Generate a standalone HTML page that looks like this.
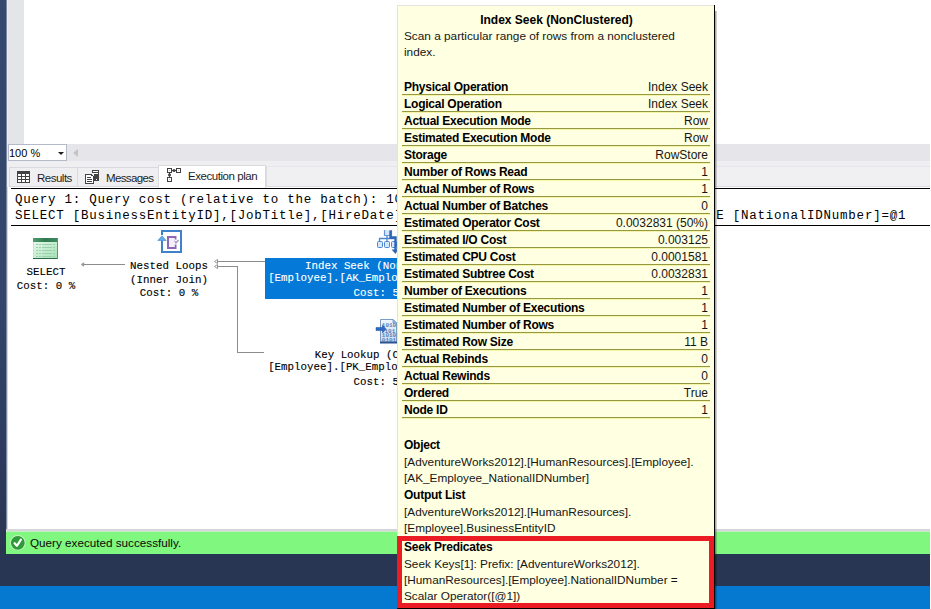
<!DOCTYPE html>
<html><head><meta charset="utf-8">
<style>
html,body{margin:0;padding:0;width:931px;height:609px;overflow:hidden;background:#fff;}
body{position:relative;font-family:"Liberation Sans",sans-serif;}
.a{position:absolute;}
.mono{font-family:"Liberation Mono",monospace;}
.tt{position:absolute;left:397px;top:5px;width:317px;height:604px;background:#ffffe1;border-left:1px solid #e4e4dc;border-top:1px solid #e4e4dc;box-sizing:border-box;}
.row{position:absolute;left:4px;width:308px;height:17px;border-bottom:1px solid #949743;box-sizing:border-box;font-size:12px;line-height:16px;}
.row::after{content:"";position:absolute;left:0;right:0;bottom:-2px;height:1px;background:#f6f5a6;}
.row b{position:absolute;left:2px;top:1px;color:#000;letter-spacing:-0.25px;}
.row span{position:absolute;right:2px;top:1px;color:#161616;}
.sh{position:absolute;left:6px;font-size:12px;line-height:17px;font-weight:bold;color:#000;letter-spacing:-0.25px;white-space:nowrap;}
.sl{position:absolute;left:6px;font-size:11.8px;line-height:16px;color:#161616;white-space:nowrap;}
.pl{position:absolute;font-family:"Liberation Mono",monospace;font-size:10.8px;line-height:13px;white-space:pre;color:#000;-webkit-text-stroke:0.12px currentColor;text-align:center;width:400px;}
</style></head><body>
<!-- left dark strip -->
<div class="a" style="left:0;top:0;width:6px;height:554px;background:linear-gradient(to bottom,#35486e 0px,#33456a 300px,#2e3d62 430px,#29344f 554px);"></div>
<div class="a" style="left:6px;top:0;width:1px;height:531px;background:#7c87a3;"></div>
<!-- editor margin -->
<div class="a" style="left:7px;top:0;width:17px;height:144px;background:#e4e5e8;"></div>
<div class="a" style="left:7px;top:0;width:1px;height:144px;background:#e8ecf8;"></div>
<!-- zoom/scroll row -->
<div class="a" style="left:7px;top:144px;width:923px;height:17px;background:#e6e6ea;"></div>
<div class="a" style="left:8px;top:144px;width:57px;height:15px;background:#fff;border:1px solid #b4bac8;"></div>
<div class="a" style="left:9px;top:147px;font-size:11px;line-height:13px;color:#000;">100 %</div>
<div class="a" style="left:58px;top:152px;width:0;height:0;border-left:3px solid transparent;border-right:3px solid transparent;border-top:3px solid #1e1e1e;"></div>
<div class="a" style="left:73px;top:149px;width:0;height:0;border-top:4px solid transparent;border-bottom:4px solid transparent;border-right:5px solid #c2c3c9;"></div>
<!-- tab strip -->
<div class="a" style="left:7px;top:161px;width:923px;height:26px;background:#efeff2;"></div>
<div class="a" style="left:7px;top:187px;width:923px;height:366px;background:#fff;"></div>
<div class="a" style="left:7px;top:187px;width:1px;height:342px;background:#d2d6e6;"></div>
<div class="a" style="left:11px;top:188px;width:919px;height:1px;background:#000;"></div>
<div class="a" style="left:11px;top:225px;width:919px;height:1px;background:#000;"></div>

<!-- tabs -->
<div class="a" style="left:266px;top:166px;width:664px;height:21px;box-sizing:border-box;border:1px solid #dcdce0;border-top-color:#e6e6ea;border-right:none;background:#f0f0f2;"></div>
<div class="a" style="left:9px;top:167px;width:68px;height:20px;box-sizing:border-box;border:1px solid #dadade;border-right:none;background:#efeff2;"></div>
<div class="a" style="left:77px;top:167px;width:81px;height:20px;box-sizing:border-box;border:1px solid #dadade;border-right:none;background:#efeff2;"></div>
<div class="a" style="left:158px;top:165px;width:108px;height:23px;box-sizing:border-box;border:1px solid #dadade;border-bottom:none;background:#fff;"></div>
<div class="a" style="left:11px;top:187px;width:147px;height:1px;background:#fff;"></div>
<svg class="a" style="left:17px;top:171px" width="13" height="12" viewBox="0 0 13 12">
<rect x="0" y="0" width="13" height="12" fill="#424242"/>
<rect x="1" y="3" width="3" height="2" fill="#fff"/><rect x="5" y="3" width="3" height="2" fill="#fff"/><rect x="9" y="3" width="3" height="2" fill="#fff"/>
<rect x="1" y="6" width="3" height="2" fill="#fff"/><rect x="5" y="6" width="3" height="2" fill="#fff"/><rect x="9" y="6" width="3" height="2" fill="#fff"/>
<rect x="1" y="9" width="3" height="2" fill="#fff"/><rect x="5" y="9" width="3" height="2" fill="#fff"/><rect x="9" y="9" width="3" height="2" fill="#fff"/>
</svg>
<div class="a" style="left:37px;top:171px;font-size:11.5px;line-height:14px;letter-spacing:-0.5px;color:#1e1e1e;">Results</div>
<svg class="a" style="left:84px;top:169px" width="16" height="16" viewBox="0 0 16 16" shape-rendering="crispEdges">
<rect x="8" y="1" width="7" height="11" fill="#424242"/>
<rect x="9" y="2" width="5" height="1" fill="#fff"/><rect x="9" y="4" width="5" height="1" fill="#fff"/><rect x="12" y="10" width="1" height="1" fill="#fff"/>
<rect x="0" y="4" width="10" height="12" fill="#efeff2"/>
<path d="M1 5 H7 L9 7 V15 H1 Z" fill="#fff"/>
<rect x="1" y="5" width="6" height="1" fill="#424242"/><rect x="1" y="5" width="1" height="10" fill="#424242"/><rect x="1" y="14" width="9" height="1" fill="#424242"/><rect x="9" y="7" width="1" height="8" fill="#424242"/>
<rect x="7" y="5" width="1" height="1" fill="#424242"/><rect x="8" y="6" width="1" height="1" fill="#424242"/><rect x="7" y="6" width="1" height="1" fill="#424242"/>
<rect x="3" y="8" width="4" height="1" fill="#424242"/><rect x="3" y="10" width="5" height="1" fill="#424242"/><rect x="3" y="12" width="5" height="1" fill="#424242"/>
</svg>
<div class="a" style="left:106px;top:171px;font-size:11.5px;line-height:14px;letter-spacing:-0.62px;color:#1e1e1e;">Messages</div>
<svg class="a" style="left:166px;top:167px" width="16" height="16" viewBox="0 0 16 16">
<rect x="1.5" y="1.5" width="4" height="4" fill="#fff" stroke="#424242"/>
<rect x="10.5" y="1.5" width="4" height="4" fill="#fff" stroke="#424242"/>
<rect x="1.5" y="10.5" width="4" height="4" fill="#fff" stroke="#424242"/>
<rect x="3" y="3" width="1" height="1" fill="#c8c8c8"/><rect x="12" y="3" width="1" height="1" fill="#c8c8c8"/><rect x="3" y="12" width="1" height="1" fill="#c8c8c8"/>
<path d="M6 3.5 H10" stroke="#424242"/><ellipse cx="8" cy="3.5" rx="1.6" ry="1.5" fill="#424242"/>
<path d="M3.5 6 V10" stroke="#424242"/><ellipse cx="3.5" cy="8" rx="1.5" ry="1.4" fill="#424242"/>
</svg>
<div class="a" style="left:188px;top:169px;font-size:11.5px;line-height:14px;letter-spacing:-0.45px;color:#1e1e1e;">Execution plan</div>
<!-- query text -->
<div class="a mono" style="left:15px;top:192px;font-size:12.5px;letter-spacing:0.75px;line-height:16px;white-space:pre;color:#000;">Query 1: Query cost (relative to the batch): 100%
SELECT [BusinessEntityID],[JobTitle],[HireDate] FROM [HumanResources].[Employee] WHERE [NationalIDNumber]=@1</div>
<!-- plan -->
<svg class="a" style="left:33px;top:238px" width="25" height="21" viewBox="0 0 25 21" shape-rendering="crispEdges">
<defs><linearGradient id="gs" x1="0" y1="0" x2="1" y2="1"><stop offset="0" stop-color="#eefaf0"/><stop offset="1" stop-color="#9fe2b2"/></linearGradient>
<linearGradient id="gh" x1="0" y1="0" x2="1" y2="0"><stop offset="0" stop-color="#4f9c6c"/><stop offset="0.5" stop-color="#2f7a52"/><stop offset="1" stop-color="#3f8a5e"/></linearGradient></defs>
<rect x="0" y="0" width="25" height="21" fill="url(#gs)"/>
<rect x="0" y="0" width="25" height="4" fill="url(#gh)"/>
<rect x="0" y="20" width="25" height="1" fill="#2c6a48"/>
<rect x="24" y="0" width="1" height="21" fill="#5a9a72"/>
<rect x="0" y="4" width="1" height="16" fill="#bfe6ca"/>
<g fill="#9ccfb0"><rect x="3" y="6" width="2" height="1"/><rect x="6" y="6" width="2" height="1"/><rect x="9" y="6" width="10" height="1"/><rect x="20" y="6" width="2" height="1"/><rect x="3" y="9" width="2" height="1"/><rect x="6" y="9" width="2" height="1"/><rect x="9" y="9" width="10" height="1"/><rect x="20" y="9" width="2" height="1"/><rect x="3" y="12" width="2" height="1"/><rect x="6" y="12" width="2" height="1"/><rect x="9" y="12" width="10" height="1"/><rect x="20" y="12" width="2" height="1"/><rect x="3" y="15" width="2" height="1"/><rect x="6" y="15" width="2" height="1"/><rect x="9" y="15" width="10" height="1"/><rect x="20" y="15" width="2" height="1"/><rect x="3" y="18" width="2" height="1"/><rect x="6" y="18" width="2" height="1"/><rect x="9" y="18" width="10" height="1"/><rect x="20" y="18" width="2" height="1"/></g>
</svg>
<div class="a" style="left:82px;top:264px;width:43px;height:1px;background:#8c8c8c;"></div>
<svg class="a" style="left:80px;top:260px" width="8" height="9"><path d="M1.2 4.5 L3.8 2.8 L3.8 6.2 Z" fill="#a0a0a0" stroke="#8c8c8c" stroke-width="0.7"/></svg>
<svg class="a" style="left:157px;top:229px" width="26" height="25" viewBox="0 0 26 25">
<path d="M5 6 V2 H24 V23 H5 V11.5" fill="none" stroke="#3f82c9" stroke-width="2"/>
<path d="M0.8 11.5 L5 6.8 L9.2 11.5 Z" fill="#62aee8" stroke="#3f82c9" stroke-width="0.6"/>
<path d="M18.5 10.5 V8 H11 V19 H18.5 V15.5" fill="none" stroke="#8c68b6" stroke-width="2"/>
<path d="M16.5 11 L19 14 L21.5 11" fill="none" stroke="#a890c8" stroke-width="1.4"/>
<rect x="12" y="9" width="5.5" height="9" fill="#f4f0fa"/>
</svg>
<div class="a" style="left:217px;top:261px;width:48px;height:1px;background:#8c8c8c;"></div>
<div class="a" style="left:217px;top:266px;width:21px;height:1px;background:#8c8c8c;"></div>
<div class="a" style="left:237px;top:266px;width:1px;height:87px;background:#8c8c8c;"></div>
<div class="a" style="left:237px;top:352px;width:27px;height:1px;background:#8c8c8c;"></div>
<svg class="a" style="left:212px;top:257px" width="8" height="14"><path d="M2.5 4.5 L5.5 2.5 L5.5 6.5 Z M2.5 9.5 L5.5 7.5 L5.5 11.5 Z" fill="#fff" stroke="#8c8c8c" stroke-width="0.9"/></svg>
<div class="a" style="left:265px;top:258px;width:132px;height:41px;background:#0479d8;"></div>
<div class="pl" style="left:-154px;top:266px;">SELECT</div>
<div class="pl" style="left:-154px;top:280px;">Cost: 0 %</div>
<div class="pl" style="left:-31px;top:260px;">Nested Loops</div>
<div class="pl" style="left:-31px;top:274px;">(Inner Join)</div>
<div class="pl" style="left:-31px;top:287px;">Cost: 0 %</div>
<div class="pl" style="left:186px;top:260px;color:#fff;">Index Seek (NonClustered)</div>
<div class="pl" style="left:188px;top:272px;color:#fff;">[Employee].[AK_Employee_NationalID...</div>
<div class="pl" style="left:186px;top:287px;color:#fff;">Cost: 50 %</div>
<div class="pl" style="left:186px;top:349px;">Key Lookup (Clustered)</div>
<div class="pl" style="left:188px;top:361px;">[Employee].[PK_Employee_BusinessEn...</div>
<div class="pl" style="left:186px;top:376px;">Cost: 50 %</div>
<svg class="a" style="left:376px;top:229px" width="22" height="26" viewBox="0 0 22 26">
<path d="M3.5 12 V9.5 H18 M11 7 V12" fill="none" stroke="#4a86cf" stroke-width="1.3"/>
<path d="M8.5 1 V6.5 H15.5 V1" fill="#d4e6f8" stroke="#6a9ad6" stroke-width="1.2"/>
<rect x="1.5" y="12.5" width="5" height="6" rx="1" fill="#d4e6f8" stroke="#4d86cc"/>
<rect x="8.5" y="12.5" width="5" height="6" rx="1" fill="#d4e6f8" stroke="#4d86cc"/>
<rect x="15.5" y="12.5" width="5" height="6" rx="1" fill="#d4e6f8" stroke="#4d86cc"/>
<path d="M14.5 1.5 V8.5 H19.5 V21" fill="none" stroke="#2f63b6" stroke-width="2.4"/>
<path d="M15.5 20.5 L19.5 25 L22 20.5 Z" fill="#2f63b6"/>
</svg>
<svg class="a" style="left:375px;top:318px" width="23" height="26" viewBox="0 0 23 26">
<defs><linearGradient id="gk" x1="0" y1="0" x2="0" y2="1"><stop offset="0" stop-color="#f0f6fe"/><stop offset="1" stop-color="#c4daf4"/></linearGradient></defs>
<path d="M5.5 1.5 H18 L21.5 5 V24.5 H5.5 Z" fill="url(#gk)" stroke="#7d9cc4"/>
<path d="M18 1.5 V5 H21.5 Z" fill="#9cc4ec" stroke="#6a94c8" stroke-width="0.8"/>
<rect x="5" y="23.5" width="17" height="2" fill="#2c5190"/>
<g font-family="Liberation Mono" font-size="6" fill="#5a7fb4" font-weight="bold"><text x="6.8" y="9">1010</text><text x="9.5" y="14.5">101</text><text x="6.8" y="19">1010</text><text x="6.8" y="23.5">0101</text></g>
<path d="M1 9.5 H7.5 V7 L11 11 L7.5 15 V12.5 H1 Z" fill="#2b6ac4" stroke="#1d4f9c" stroke-width="0.5"/>
</svg>
<!-- status -->
<div class="a" style="left:6px;top:529px;width:924px;height:2px;background:#d6d6da;"></div>
<div class="a" style="left:6px;top:531px;width:924px;height:1px;background:#c4eec4;"></div>
<div class="a" style="left:6px;top:532px;width:924px;height:22px;background:#80f77e;"></div>
<svg class="a" style="left:10px;top:535px" width="17" height="17" viewBox="0 0 17 17">
<circle cx="7.8" cy="7.8" r="7.8" fill="#c6f4c2"/>
<circle cx="7.8" cy="7.8" r="6.9" fill="#2f9a3a"/>
<path d="M4.6 8.2 L6.9 10.8 L10.9 4.6" fill="none" stroke="#fff" stroke-width="2.2" stroke-linecap="round" stroke-linejoin="round"/>
</svg>
<div class="a" style="left:30px;top:536px;font-size:11.7px;line-height:14px;color:#0a0a0a;">Query executed successfully.</div>
<div class="a" style="left:0;top:554px;width:930px;height:32px;background:#283654;"></div>
<div class="a" style="left:0;top:586px;width:930px;height:23px;background:#0579cf;"></div>
<!--TT-->
<div class="tt">
<div class="a" style="left:0;top:6px;width:317px;text-align:center;font-size:12px;line-height:16px;font-weight:bold;color:#000;">Index Seek (NonClustered)</div>
<div class="a" style="left:6px;top:22px;font-size:11.8px;line-height:16px;color:#161616;">Scan a particular range of rows from a nonclustered<br>index.</div>
<div class="row" style="top:72px;"><b>Physical Operation</b><span>Index Seek</span></div>
<div class="row" style="top:89px;"><b>Logical Operation</b><span>Index Seek</span></div>
<div class="row" style="top:106px;"><b>Actual Execution Mode</b><span>Row</span></div>
<div class="row" style="top:123px;"><b>Estimated Execution Mode</b><span>Row</span></div>
<div class="row" style="top:140px;"><b>Storage</b><span>RowStore</span></div>
<div class="row" style="top:157px;"><b>Number of Rows Read</b><span>1</span></div>
<div class="row" style="top:174px;"><b>Actual Number of Rows</b><span>1</span></div>
<div class="row" style="top:191px;"><b>Actual Number of Batches</b><span>0</span></div>
<div class="row" style="top:208px;"><b>Estimated Operator Cost</b><span>0.0032831 (50%)</span></div>
<div class="row" style="top:225px;"><b>Estimated I/O Cost</b><span>0.003125</span></div>
<div class="row" style="top:242px;"><b>Estimated CPU Cost</b><span>0.0001581</span></div>
<div class="row" style="top:259px;"><b>Estimated Subtree Cost</b><span>0.0032831</span></div>
<div class="row" style="top:276px;"><b>Number of Executions</b><span>1</span></div>
<div class="row" style="top:293px;"><b>Estimated Number of Executions</b><span>1</span></div>
<div class="row" style="top:310px;"><b>Estimated Number of Rows</b><span>1</span></div>
<div class="row" style="top:327px;"><b>Estimated Row Size</b><span>11 B</span></div>
<div class="row" style="top:344px;"><b>Actual Rebinds</b><span>0</span></div>
<div class="row" style="top:361px;"><b>Actual Rewinds</b><span>0</span></div>
<div class="row" style="top:378px;"><b>Ordered</b><span>True</span></div>
<div class="row" style="top:395px;"><b>Node ID</b><span>1</span></div>
<div class="sh" style="top:431px;">Object</div><div class="sl" style="top:448px;">[AdventureWorks2012].[HumanResources].[Employee].</div><div class="sl" style="top:464px;">[AK_Employee_NationalIDNumber]</div>
<div class="sh" style="top:481px;">Output List</div><div class="sl" style="top:498px;">[AdventureWorks2012].[HumanResources].</div><div class="sl" style="top:514px;">[Employee].BusinessEntityID</div>
<div class="sh" style="top:533px;">Seek Predicates</div><div class="sl" style="top:550px;">Seek Keys[1]: Prefix: [AdventureWorks2012].</div><div class="sl" style="top:566px;">[HumanResources].[Employee].NationalIDNumber =</div><div class="sl" style="top:582px;">Scalar Operator([@1])</div>
</div>
<div class="a" style="left:397px;top:536px;width:317px;height:72px;box-sizing:border-box;border:5px solid #ec1c24;"></div>
<div class="a" style="left:714px;top:5px;width:1px;height:604px;background:#000;"></div>
<div class="a" style="left:397px;top:608px;width:318px;height:1px;background:#000;"></div>
<div class="a" style="left:715px;top:11px;width:2px;height:598px;background:linear-gradient(to right,rgba(0,0,0,.42),rgba(0,0,0,.1));"></div>
<!--/TT-->
</body></html>
